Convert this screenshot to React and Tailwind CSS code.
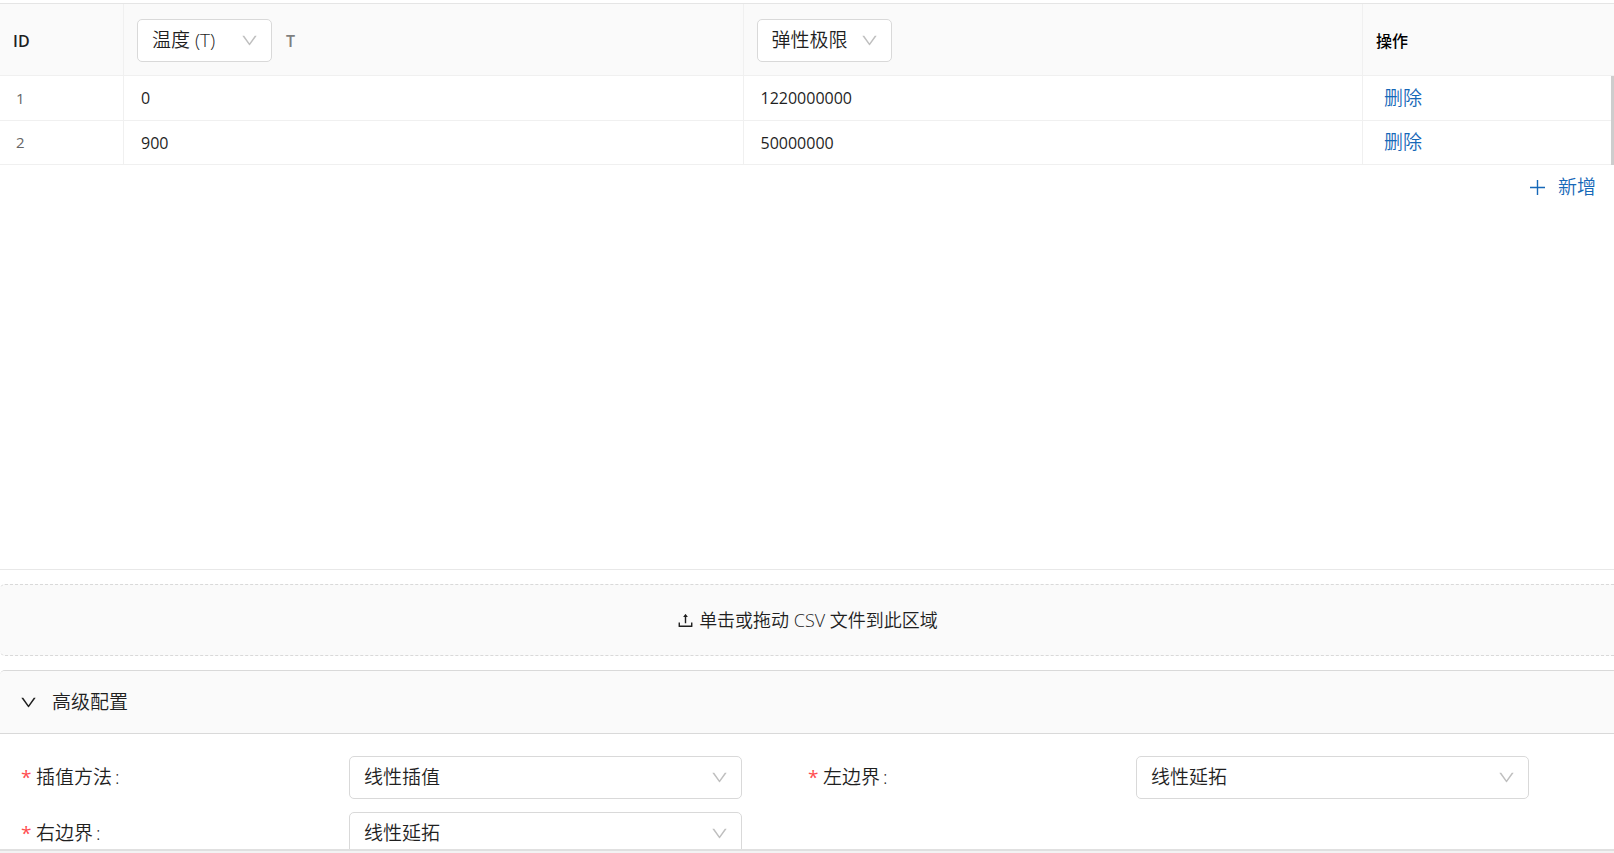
import React, { useState } from 'react';
import { AiOutlineDown, AiOutlineUpload } from 'react-icons/ai';

const initialRows = [
  { temperature: '0', limit: '1220000000' },
  { temperature: '900', limit: '50000000' },
];

const extrapolations = ['线性延拓', '常数延拓'];

function PlusIcon() {
  return (
    <svg width="17" height="17" viewBox="0 0 17 17" fill="none" stroke="currentColor" strokeWidth="1.4" aria-hidden="true">
      <path d="M8.5 1v15M1 8.5h15" />
    </svg>
  );
}

function Select({ id, label, options, className = '' }) {
  return (
    <div className={`relative ${className}`}>
      <select
        id={id}
        aria-label={label}
        className="block h-[43px] w-full appearance-none rounded-[5px] border border-[#d9d9d9] bg-white pr-9 pl-[14px] text-[19px] text-[#1f1f1f] outline-none focus:border-[#1668b8]"
      >
        {options.map((option) => (
          <option key={option}>{option}</option>
        ))}
      </select>
      <AiOutlineDown size={19} className="pointer-events-none absolute top-3 right-[13px] text-[#bfbfbf]" />
    </div>
  );
}

function Field({ id, label, options }) {
  return (
    <div className="flex items-center">
      <label htmlFor={id} className="flex w-5/12 items-center text-[19px]">
        <span className="mr-[3px] w-3 font-normal text-[#ff4d4f]">*</span>
        {label}
        <span className="ml-[3px]">:</span>
      </label>
      <Select id={id} options={options} className="w-1/2" />
    </div>
  );
}

export default function App() {
  const [rows, setRows] = useState(initialRows);
  const [open, setOpen] = useState(true);

  const updateRow = (index, key, value) => {
    setRows(rows.map((row, i) => (i === index ? { ...row, [key]: value } : row)));
  };

  return (
    <div className="flex h-screen flex-col overflow-hidden bg-white font-['Open_Sans','Noto_Sans_CJK_SC',sans-serif] font-[350] text-[#1f1f1f]">
      <main className="mt-[3px] min-h-0 flex-1 overflow-hidden border-t border-[#e5e5e5]">
        <section className="h-[566px] border-b border-[#e8e8e8]">
          <div className="relative">
            <table className="w-full table-fixed border-separate border-spacing-0 text-left">
              <colgroup>
                <col className="w-[124px]" />
                <col />
                <col />
                <col className="w-[251px]" />
              </colgroup>
              <thead className="bg-[#fafafa] [&_th]:border-b [&_th]:border-[#f0f0f0] [&_th]:pt-[2px]">
                <tr className="h-[72px]">
                  <th className="border-r px-[13px] text-base font-semibold">ID</th>
                  <th className="border-r px-[13px]">
                    <div className="flex items-center gap-[14px]">
                      <Select label="自变量" options={['温度 (T)']} className="w-[135px] font-[350]" />
                      <span className="text-base font-semibold text-[#7f7f7f]">T</span>
                    </div>
                  </th>
                  <th className="border-r px-[13px]">
                    <Select label="因变量" options={['弹性极限']} className="w-[135px] font-[350]" />
                  </th>
                  <th className="px-[13px] text-base font-medium text-black">操作</th>
                </tr>
              </thead>
              <tbody className="[&_td]:border-b [&_td]:border-[#f0f0f0]">
                {rows.map((row, index) => (
                  <tr key={index} className="h-11 first:h-[45px]">
                    <td className="border-r px-4 text-[15px] font-normal text-[#666666]">{index + 1}</td>
                    <td className="border-r px-[17px]">
                      <input
                        aria-label={`温度 ${index + 1}`}
                        className="block w-full bg-transparent text-base font-normal outline-none"
                        value={row.temperature}
                        onChange={(e) => updateRow(index, 'temperature', e.target.value)}
                      />
                    </td>
                    <td className="border-r px-[17px]">
                      <input
                        aria-label={`弹性极限 ${index + 1}`}
                        className="block w-full bg-transparent text-base font-normal outline-none"
                        value={row.limit}
                        onChange={(e) => updateRow(index, 'limit', e.target.value)}
                      />
                    </td>
                    <td className="px-[21px]">
                      <button
                        type="button"
                        className="block text-[19px] text-[#1668b8]"
                        onClick={() => setRows(rows.filter((_, i) => i !== index))}
                      >
                        删除
                      </button>
                    </td>
                  </tr>
                ))}
              </tbody>
            </table>
            {/* scrollbar thumb */}
            <div className="absolute top-[72px] right-0 bottom-0 w-[3px] bg-[#cdcdcd]" />
          </div>
          <div className="flex justify-end px-[18px] pt-2">
            <button
              type="button"
              className="flex items-center gap-3 text-[19px] text-[#1668b8]"
              onClick={() => setRows([...rows, { temperature: '', limit: '' }])}
            >
              <PlusIcon />
              新增
            </button>
          </div>
        </section>

        <button
          type="button"
          className="mt-[14px] flex h-[72px] w-full items-center justify-center gap-1 rounded-l-[5px] border-y border-dashed border-[#d9d9d9] bg-[#fafafa] text-[18px]"
        >
          <AiOutlineUpload size={19} />
          单击或拖动 CSV 文件到此区域
        </button>

        <section className="mt-[14px] rounded-tl-[5px] border-t border-[#d9d9d9]">
          <button
            type="button"
            aria-expanded={open}
            onClick={() => setOpen(!open)}
            className="flex h-[63px] w-full items-center gap-[14px] rounded-tl-[5px] border-b border-[#d9d9d9] bg-[#fafafa] px-[19px] text-[19px]"
          >
            <AiOutlineDown size={19} />
            高级配置
          </button>
          {open && (
            <div className="grid grid-cols-2 gap-y-[13px] pt-[22px] pr-[19px] pl-[21px]">
              <Field id="method" label="插值方法" options={['线性插值', '样条插值']} />
              <Field id="left" label="左边界" options={extrapolations} />
              <Field id="right" label="右边界" options={extrapolations} />
            </div>
          )}
        </section>
      </main>
      <footer className="h-1 shrink-0 border-t-2 border-[#e0e0e0] bg-[#f3f3f3]" />
    </div>
  );
}
